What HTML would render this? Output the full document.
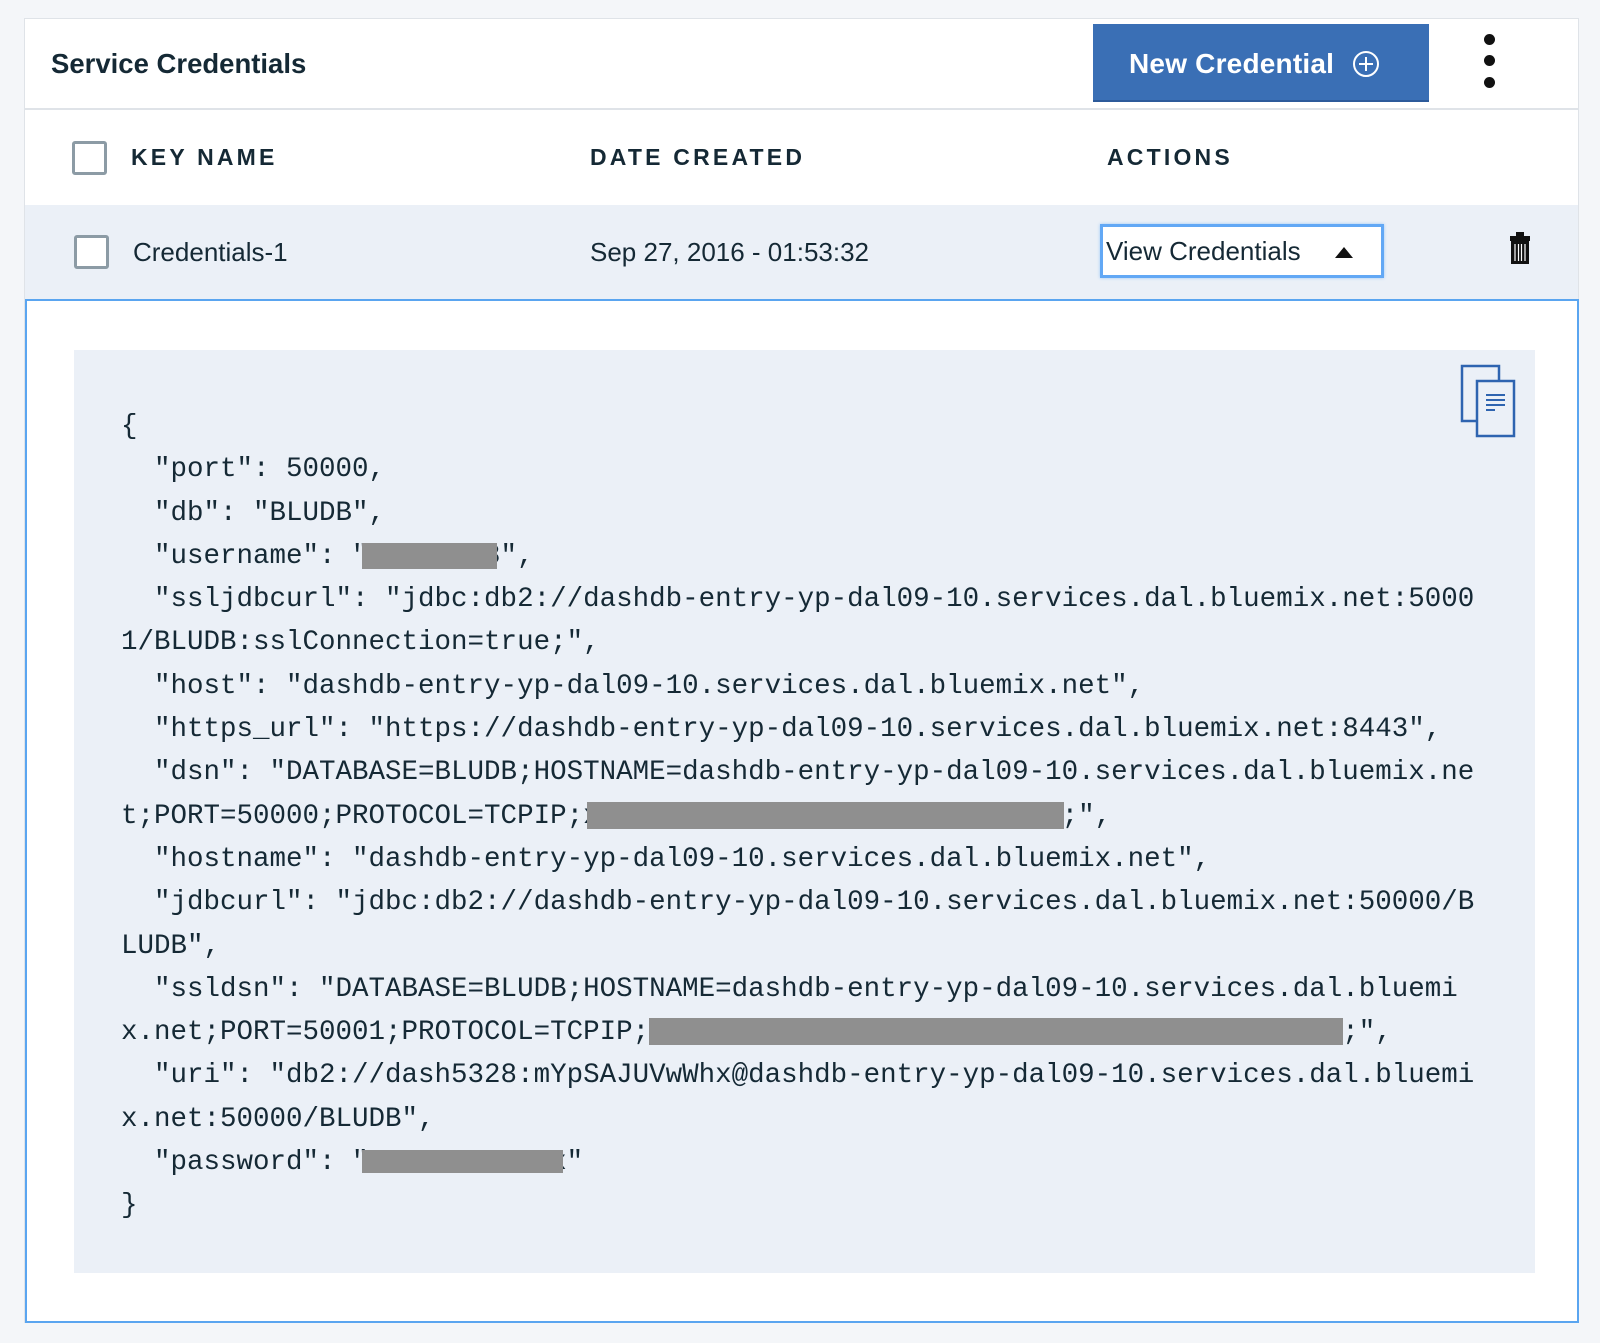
<!DOCTYPE html>
<html><head><meta charset="utf-8"><style>
*{margin:0;padding:0;box-sizing:border-box}
body{width:1600px;height:1343px;background:#f4f6f9;font-family:"Liberation Sans",sans-serif;color:#152935;position:relative;overflow:hidden}
.abs{position:absolute}
.card{left:24px;top:18px;width:1555px;height:1305px;background:#fff;border:1px solid #dfe3e8}
.hdrline{left:25px;top:108px;width:1553px;height:2px;background:#dfe3e8}
.title{left:51px;top:48px;font-size:27.5px;font-weight:bold;letter-spacing:0}
.btn{left:1093px;top:24px;width:336px;height:78px;background:#3a6fb5;border-bottom:2px solid #2c5a9a;color:#fff;font-size:28px;font-weight:bold;padding:24px 0 0 36px;letter-spacing:0.2px}
.dot{width:11px;height:11px;border-radius:50%;background:#111;left:1484px}
.th{top:144px;font-size:23px;font-weight:bold;letter-spacing:3.2px}
.cb{width:35px;height:34px;border:3px solid #8c9ba5;border-radius:3px;background:#fff}
.row{left:25px;top:205px;width:1553px;height:94px;background:#ebf0f7}
.td{top:237px;font-size:26px;letter-spacing:0}
.vc{left:1100px;top:224px;width:284px;height:54px;border:3px solid #62a8f5;box-shadow:0 0 3px #9cc8f8;background:#fff;font-size:26px;padding:9px 0 0 3px;letter-spacing:0}
.exp{left:25px;top:299px;width:1554px;height:1024px;border:2px solid #5aa5f0;background:#fff}
.panel{left:74px;top:350px;width:1461px;height:923px;background:#ebf0f7}
pre{position:absolute;left:121px;top:405px;font-family:"Liberation Mono",monospace;font-size:27.5px;line-height:43.3px;color:#152935}
.red{background:#8f8f8f}
</style></head><body>
<div class="abs card"></div>
<div class="abs hdrline"></div>
<div class="abs title">Service Credentials</div>
<div class="abs btn">New Credential <svg width="28" height="28" viewBox="0 0 28 28" style="vertical-align:-5px;margin-left:10px"><circle cx="14" cy="14" r="12" fill="none" stroke="#fff" stroke-width="2"/><path d="M14 7v14M7 14h14" stroke="#fff" stroke-width="2"/></svg></div>
<div class="abs dot" style="top:34px"></div>
<div class="abs dot" style="top:55px"></div>
<div class="abs dot" style="top:77px"></div>
<div class="abs cb" style="left:72px;top:141px"></div>
<div class="abs th" style="left:131px">KEY NAME</div>
<div class="abs th" style="left:590px">DATE CREATED</div>
<div class="abs th" style="left:1107px">ACTIONS</div>
<div class="abs row"></div>
<div class="abs cb" style="left:74px;top:235px"></div>
<div class="abs td" style="left:133px">Credentials-1</div>
<div class="abs td" style="left:590px">Sep 27, 2016 - 01:53:32</div>
<div class="abs vc">View Credentials <svg width="20" height="14" viewBox="0 0 20 14" style="margin-left:26px;vertical-align:1px"><path d="M1 13L10 2L19 13Z" fill="#111"/></svg></div>
<svg class="abs" style="left:1508px;top:231px" width="24" height="34" viewBox="0 0 24 34"><rect x="8" y="1" width="8" height="4" fill="#111"/><rect x="2" y="5" width="20" height="5" fill="#111"/><rect x="3" y="10" width="18" height="23" fill="#111"/><path d="M7 13v17M10.5 13v17M13.5 13v17M17 13v17" stroke="#fff" stroke-width="1.2"/></svg>
<div class="abs exp"></div>
<div class="abs panel"></div>
<svg class="abs" style="left:1460px;top:364px" width="56" height="74" viewBox="0 0 56 74"><rect x="2" y="2" width="37" height="55" fill="#ebf0f7" stroke="#2e64b0" stroke-width="2.5"/><rect x="17" y="17" width="37" height="55" fill="#ebf0f7" stroke="#2e64b0" stroke-width="2.5"/><path d="M26 31h19M26 36h19M26 41h19M26 46h9" stroke="#2e64b0" stroke-width="2"/></svg>
<pre>{
  "port": 50000,
  "db": "BLUDB",
  "username": "dash5328",
  "ssljdbcurl": "jdbc:db2://dashdb-entry-yp-dal09-10.services.dal.bluemix.net:5000
1/BLUDB:sslConnection=true;",
  "host": "dashdb-entry-yp-dal09-10.services.dal.bluemix.net",
  "https_url": "https://dashdb-entry-yp-dal09-10.services.dal.bluemix.net:8443",
  "dsn": "DATABASE=BLUDB;HOSTNAME=dashdb-entry-yp-dal09-10.services.dal.bluemix.ne
t;PORT=50000;PROTOCOL=TCPIP;xxxxxxxxxxxxxxxxxxxxxxxxxxxxx;",
  "hostname": "dashdb-entry-yp-dal09-10.services.dal.bluemix.net",
  "jdbcurl": "jdbc:db2://dashdb-entry-yp-dal09-10.services.dal.bluemix.net:50000/B
LUDB",
  "ssldsn": "DATABASE=BLUDB;HOSTNAME=dashdb-entry-yp-dal09-10.services.dal.bluemi
x.net;PORT=50001;PROTOCOL=TCPIP;xxxxxxxxxxxxxxxxxxxxxxxxxxxxxxxxxxxxxxxxxx;",
  "uri": "db2://dash5328:mYpSAJUVwWhx@dashdb-entry-yp-dal09-10.services.dal.bluemi
x.net:50000/BLUDB",
  "password": "xxxxxxxxxxxx"
}</pre>
<div class="abs red" style="left:362px;top:543px;width:135px;height:26px"></div>
<div class="abs red" style="left:587px;top:802px;width:477px;height:27px"></div>
<div class="abs red" style="left:649px;top:1018px;width:694px;height:27px"></div>
<div class="abs red" style="left:362px;top:1150px;width:201px;height:23px"></div>
</body></html>
